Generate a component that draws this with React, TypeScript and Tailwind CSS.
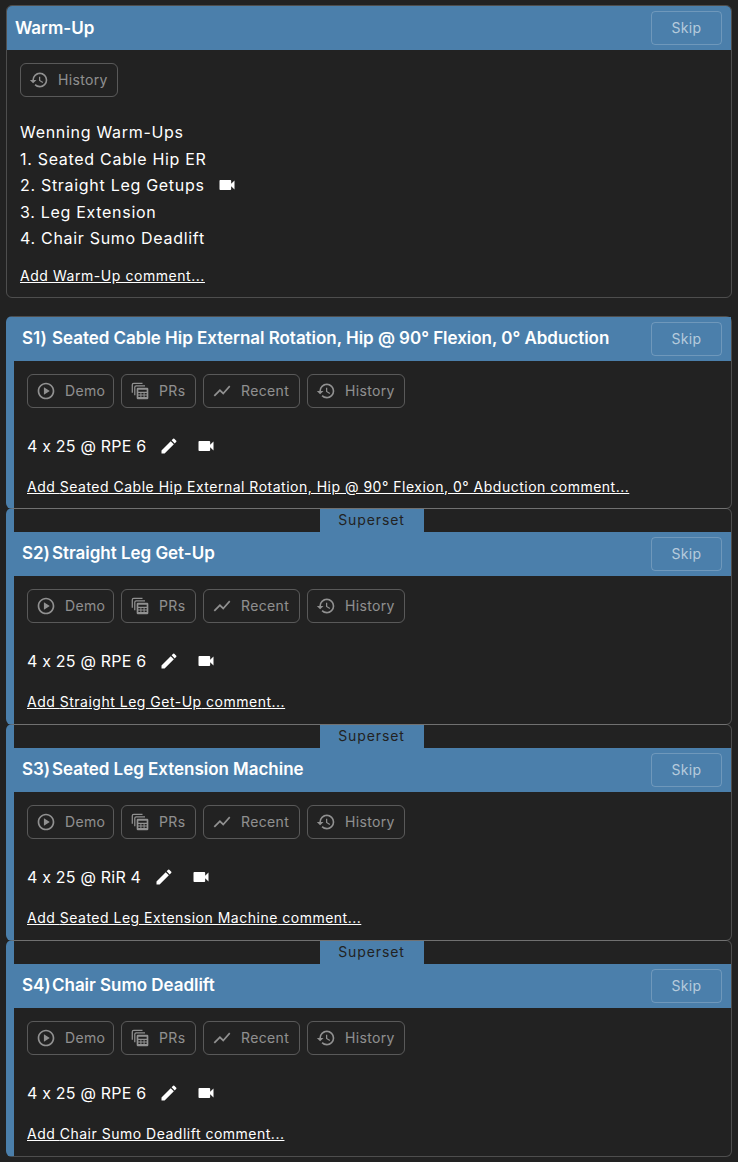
import { MdEdit, MdHistory, MdOutlinePlayCircle, MdShowChart, MdVideocam } from "react-icons/md";
import type { ComponentType } from "react";

const PrsIcon = ({ className }: { className?: string }) => (
  <svg viewBox="0 0 24 24" fill="currentColor" className={className}>
    <path d="M2 4.500A2.500 2.500 0 0 1 4.500 2H15v1.500H4.500a1 1 0 0 0-1 1V14H2z" />
    <path d="M5 7.500A2.500 2.500 0 0 1 7.500 5H18v1.500H7.500a1 1 0 0 0-1 1V17H5z" />
    <path d="M9.500 8h11A1.500 1.500 0 0 1 22 9.500v11a1.500 1.500 0 0 1-1.500 1.500h-11A1.500 1.500 0 0 1 8 20.500v-11A1.500 1.500 0 0 1 9.500 8zm.5 2.500v2.500h10v-2.500zm0 4v1.800h2.500v-1.800zm3.700 0v1.800h2.600v-1.800zm3.800 0v1.800H20v-1.800zm-7.500 3v1.800h2.500v-1.800zm3.700 0v1.800h2.600v-1.800zm3.800 0v1.800H20v-1.800z" fillRule="evenodd" />
  </svg>
);

const buttons: { icon: ComponentType<{ className?: string }>; label: string; width: string }[] = [
  { icon: MdOutlinePlayCircle, label: "Demo", width: "w-[87px]" },
  { icon: PrsIcon, label: "PRs", width: "w-[75px]" },
  { icon: MdShowChart, label: "Recent", width: "w-[97px]" },
  { icon: MdHistory, label: "History", width: "w-[98px]" },
];

const Header = ({ children }: { children: React.ReactNode }) => (
  <div className="flex h-11 items-center justify-between bg-[#4b7fab] pr-[9px]">
    <div className="pt-px text-[17px] font-semibold tracking-[-0.03px] text-white">{children}</div>
    <button className="h-[34px] w-[71px] rounded border border-white/20 text-sm tracking-wide text-white/60">Skip</button>
  </div>
);

const ToolButton = ({ icon: Icon, label, width }: { icon: ComponentType<{ className?: string }>; label: string; width: string }) => (
  <button className={`flex h-[34px] items-center gap-[9px] rounded-md border border-white/25 pl-2 text-sm tracking-wide text-white/50 ${width}`}>
    <Icon className="h-5 w-5 shrink-0" />
    <span>{label}</span>
  </button>
);

const Exercise = ({ tag, name, scheme, superset }: { tag: string; name: string; scheme: string; superset?: boolean }) => (
  <div className={`rounded-md border border-l-8 border-white/20 border-l-[#4b7fab] ${superset ? "-mt-px" : ""}`}>
    {superset && (
      <div className="flex h-[23px] justify-center pr-[2px]">
        <div className="flex w-[104px] items-center justify-center bg-[#4b7fab] text-sm tracking-[0.9px] text-[#222222]">Superset</div>
      </div>
    )}
    <Header>
      <div className="flex gap-[3px] pl-2">
        <span className="w-[27px]">{tag})</span>
        <span>{name}</span>
      </div>
    </Header>
    <div className={`pl-[13px] pt-[13px] ${superset ? "h-[148px]" : "h-[147px]"}`}>
      <div className="flex gap-[7px]">
        {buttons.map(b => <ToolButton key={b.label} {...b} />)}
      </div>
      <div className="mt-[24px] flex h-[28px] items-center text-base tracking-[0.2px]">
        <span>{scheme}</span>
        <MdEdit className="ml-[13px] h-5 w-5" />
        <MdVideocam className="ml-[17px] h-5 w-5" />
      </div>
      <div className="mt-[13px] text-sm leading-[28px] tracking-[0.5px] underline">Add {name} comment...</div>
    </div>
  </div>
);

export default function App() {
  return (
    <div className="min-h-[1162px] bg-[#222222] pl-[6px] pr-[6px] pt-[5px] text-white [font-family:Inter,sans-serif] [font-feature-settings:'calt'_0]">
      <div className="overflow-hidden rounded-md border border-white/20">
        <Header><div className="pl-2">Warm-Up</div></Header>
        <div className="px-[13px] pb-[8px] pt-[13px]">
          <ToolButton icon={MdHistory} label="History" width="w-[98px]" />
          <div className="mt-[22px] text-base leading-[26.5px] tracking-[0.7px]">
            <div>Wenning Warm-Ups</div>
            <div>1. Seated Cable Hip ER</div>
            <div className="flex items-center">2. Straight Leg Getups<MdVideocam className="ml-[12px] h-5 w-5" /></div>
            <div>3. Leg Extension</div>
            <div>4. Chair Sumo Deadlift</div>
          </div>
          <div className="mt-[11px] text-sm leading-[26px] tracking-[0.55px] underline">Add Warm-Up comment...</div>
        </div>
      </div>
      <div className="mt-[18px]">
        <Exercise tag="S1" name="Seated Cable Hip External Rotation, Hip @ 90° Flexion, 0° Abduction" scheme="4 x 25 @ RPE 6" />
        <Exercise tag="S2" name="Straight Leg Get-Up" scheme="4 x 25 @ RPE 6" superset />
        <Exercise tag="S3" name="Seated Leg Extension Machine" scheme="4 x 25 @ RiR 4" superset />
        <Exercise tag="S4" name="Chair Sumo Deadlift" scheme="4 x 25 @ RPE 6" superset />
      </div>
    </div>
  );
}
